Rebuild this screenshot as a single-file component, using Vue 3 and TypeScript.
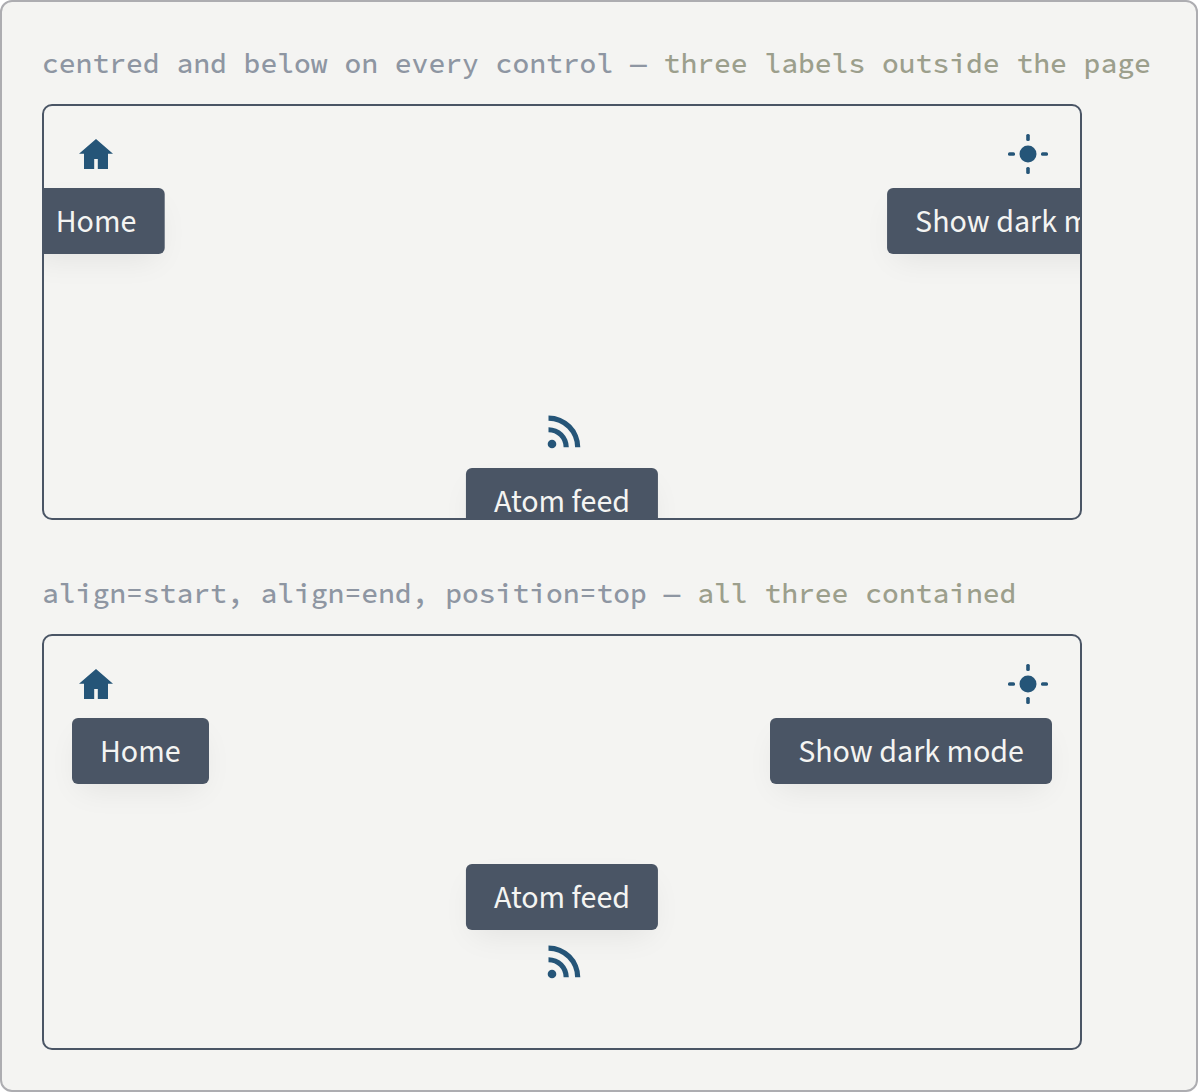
<script setup lang="ts">
type Icon = 'home' | 'sun' | 'feed'
type Align = 'start' | 'center' | 'end'
type Side = 'top' | 'bottom'

interface Control {
  icon: Icon
  label: string
  align: Align
  side: Side
}

interface Example {
  id: string
  setting: string
  result: string
  header: Control[]
  footer: Control[]
}

const examples: Example[] = [
  {
    id: 'default',
    setting: 'centred and below on every control —',
    result: 'three labels outside the page',
    header: [
      { icon: 'home', label: 'Home', align: 'center', side: 'bottom' },
      { icon: 'sun', label: 'Show dark mode', align: 'center', side: 'bottom' },
    ],
    footer: [{ icon: 'feed', label: 'Atom feed', align: 'center', side: 'bottom' }],
  },
  {
    id: 'aligned',
    setting: 'align=start, align=end, position=top —',
    result: 'all three contained',
    header: [
      { icon: 'home', label: 'Home', align: 'start', side: 'bottom' },
      { icon: 'sun', label: 'Show dark mode', align: 'end', side: 'bottom' },
    ],
    footer: [{ icon: 'feed', label: 'Atom feed', align: 'center', side: 'top' }],
  },
]
</script>

<template>
  <main class="sheet">
    <section v-for="example in examples" :key="example.id" class="example">
      <h2 class="caption">
        {{ example.setting }} <span class="result">{{ example.result }}</span>
      </h2>
      <div class="frame">
        <div
          v-for="(row, index) in [example.header, example.footer]"
          :key="index"
          class="row"
          :class="{ 'row-footer': index === 1 }"
        >
          <div v-for="control in row" :key="control.label" class="control">
            <button
              type="button"
              class="icon-button"
              :aria-labelledby="`${example.id}-${control.icon}`"
            >
              <svg v-if="control.icon === 'home'" class="icon" viewBox="0 0 48 48" aria-hidden="true">
                <path d="M24 9 41 23.7h-5V39H25.8V29h-3.6v10H12V23.7H7z" />
              </svg>
              <svg v-else-if="control.icon === 'sun'" class="icon" viewBox="0 0 48 48" aria-hidden="true">
                <circle cx="24" cy="24" r="8.5" />
                <rect x="22.2" y="4" width="3.6" height="7" rx="1.5" />
                <rect x="22.2" y="37" width="3.6" height="7" rx="1.5" />
                <rect x="4" y="22.2" width="7" height="3.6" rx="1.5" />
                <rect x="37" y="22.2" width="7" height="3.6" rx="1.5" />
              </svg>
              <svg v-else class="icon" viewBox="0 0 48 48" aria-hidden="true">
                <circle cx="14" cy="34" r="4.3" />
                <path d="M10.5 5.5v5.2A26.6 26.6 0 0 1 37.1 37.3h5.2A31.8 31.8 0 0 0 10.5 5.5z" />
                <path d="M10.5 17.2v5A15.1 15.1 0 0 1 25.6 37.3h5.2A20.2 20.2 0 0 0 10.5 17.2z" />
              </svg>
            </button>
            <span
              :id="`${example.id}-${control.icon}`"
              role="tooltip"
              class="tooltip"
              :class="[`align-${control.align}`, `side-${control.side}`]"
            >{{ control.label }}</span>
          </div>
        </div>
      </div>
    </section>
  </main>
</template>

<style>
body {
  margin: 0;
  background: #ffffff;
}
</style>

<style scoped>
.sheet {
  box-sizing: border-box;
  display: flex;
  flex-direction: column;
  gap: 52px;
  padding: 40px;
  border: 2px solid #adadb1;
  border-radius: 12px;
  background: #f4f4f2;
}

.example {
  display: flex;
  flex-direction: column;
  gap: 20px;
}

.caption {
  margin: 0;
  color: #8e96a2;
  font-family: "Source Code Pro", "DejaVu Sans Mono", monospace;
  font-size: 28px;
  font-weight: 500;
  line-height: 42px;
  white-space: nowrap;
}

.result {
  color: #9c9f8c;
}

.frame {
  box-sizing: border-box;
  display: flex;
  flex-direction: column;
  justify-content: space-between;
  max-width: 1040px;
  min-height: 416px;
  padding: 24px 28px 60px;
  overflow: hidden;
  border: 2px solid #4a5565;
  border-radius: 10px;
}

.row {
  display: flex;
  justify-content: space-between;
}

.row-footer {
  justify-content: center;
}

.control {
  position: relative;
}

.icon-button {
  display: block;
  width: 48px;
  height: 48px;
  padding: 0;
  border: 0;
  background: none;
  color: #255578;
  cursor: pointer;
}

.icon {
  display: block;
  width: 48px;
  height: 48px;
  fill: currentColor;
}

.tooltip {
  position: absolute;
  padding: 14px 28px 12px;
  border-radius: 6px;
  background: #4a5565;
  box-shadow: 0 12px 32px -8px rgba(0, 0, 0, 0.08);
  color: #f4f4f2;
  font-family: "Source Sans 3", "Source Sans Pro", "Noto Sans CJK SC", "Noto Sans", sans-serif;
  font-size: 32px;
  line-height: 40px;
  white-space: nowrap;
}

.side-bottom {
  top: calc(100% + 10px);
}

.side-top {
  bottom: calc(100% + 10px);
}

.align-start {
  left: 0;
}

.align-center {
  left: 50%;
  transform: translateX(-50%);
}

.align-end {
  right: 0;
}
</style>
